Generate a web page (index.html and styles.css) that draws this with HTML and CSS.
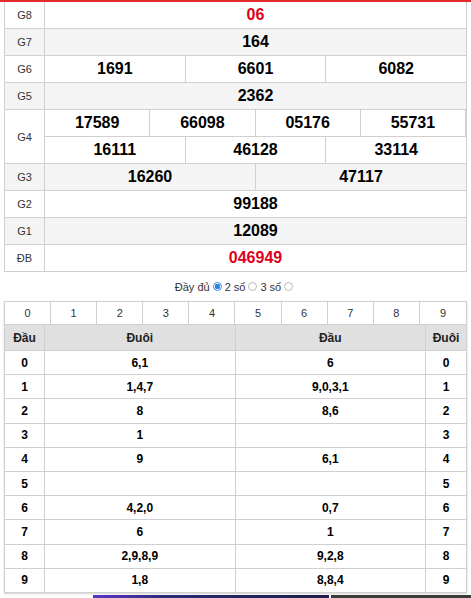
FILE: index.html
```html
<!DOCTYPE html>
<html lang="vi">
<head>
<meta charset="utf-8">
<title>KQXS</title>
<link rel="stylesheet" href="styles.css">
</head>
<body>
<div class="topbar"></div>
<div class="page">
  <div class="kq">
    <div class="row"><div class="lbl">G8</div><div class="vals"><div class="line"><div class="v red">06</div></div></div></div>
    <div class="row alt"><div class="lbl">G7</div><div class="vals"><div class="line"><div class="v">164</div></div></div></div>
    <div class="row"><div class="lbl">G6</div><div class="vals"><div class="line"><div class="v">1691</div><div class="v">6601</div><div class="v">6082</div></div></div></div>
    <div class="row alt"><div class="lbl">G5</div><div class="vals"><div class="line"><div class="v">2362</div></div></div></div>
    <div class="row"><div class="lbl">G4</div><div class="vals">
      <div class="line boxed"><div class="v">17589</div><div class="v">66098</div><div class="v">05176</div><div class="v">55731</div></div>
      <div class="line"><div class="v">16111</div><div class="v">46128</div><div class="v">33114</div></div>
    </div></div>
    <div class="row alt"><div class="lbl">G3</div><div class="vals"><div class="line"><div class="v">16260</div><div class="v">47117</div></div></div></div>
    <div class="row"><div class="lbl">G2</div><div class="vals"><div class="line"><div class="v">99188</div></div></div></div>
    <div class="row alt"><div class="lbl">G1</div><div class="vals"><div class="line"><div class="v">12089</div></div></div></div>
    <div class="row"><div class="lbl">ĐB</div><div class="vals"><div class="line"><div class="v red">046949</div></div></div></div>
  </div>

  <div class="opts">
    <span>Đầy đủ</span><span class="radio on"></span><span>2 số</span><span class="radio"></span><span>3 số</span><span class="radio"></span>
  </div>

  <div class="tk">
    <div class="digits">
      <div>0</div><div>1</div><div>2</div><div>3</div><div>4</div><div>5</div><div>6</div><div>7</div><div>8</div><div>9</div>
    </div>
    <div class="r head"><div>Đầu</div><div>Đuôi</div><div>Đầu</div><div>Đuôi</div></div>
    <div class="r"><div>0</div><div>6,1</div><div>6</div><div>0</div></div>
    <div class="r"><div>1</div><div>1,4,7</div><div>9,0,3,1</div><div>1</div></div>
    <div class="r"><div>2</div><div>8</div><div>8,6</div><div>2</div></div>
    <div class="r"><div>3</div><div>1</div><div></div><div>3</div></div>
    <div class="r"><div>4</div><div>9</div><div>6,1</div><div>4</div></div>
    <div class="r"><div>5</div><div></div><div></div><div>5</div></div>
    <div class="r"><div>6</div><div>4,2,0</div><div>0,7</div><div>6</div></div>
    <div class="r"><div>7</div><div>6</div><div>1</div><div>7</div></div>
    <div class="r"><div>8</div><div>2,9,8,9</div><div>9,2,8</div><div>8</div></div>
    <div class="r"><div>9</div><div>1,8</div><div>8,8,4</div><div>9</div></div>
  </div>

  <div class="ads"><div class="ad1"></div><div class="ad2"></div></div>
</div>
</body>
</html>
```
FILE: styles.css
```css
* { box-sizing: border-box; }
html, body { margin: 0; padding: 0; background: #fff; }
body { font-family: "Liberation Sans", Arial, sans-serif; color: #000; overflow: hidden; }

.topbar { height: 2px; background: #e52a2a; }

.page { padding: 0 4px 0 4px; }

.kq {
  border-left: 1px solid #d0d0d0;
  border-right: 1px solid #d0d0d0;
}
.row { display: flex; border-bottom: 1px solid #d0d0d0; background: #fff; }
.row.alt { background: #f4f4f4; }
.lbl {
  width: 40px;
  border-right: 1px solid #d0d0d0;
  display: flex; align-items: center; justify-content: center;
  font-size: 11px; color: #333;
}
.vals { flex: 1; display: flex; flex-direction: column; }
.line { display: flex; height: 26px; }
.line + .line { border-top: 1px solid #d0d0d0; height: 27px; }
.v {
  flex: 1 1 0;
  display: flex; align-items: center; justify-content: center;
  font-size: 16px; font-weight: bold;
}
.v + .v { border-left: 1px solid #d0d0d0; }
.line.boxed .v { border-left: 0; border-right: 1px solid #d0d0d0; }
.red { color: #e0001b; }

.opts {
  height: 29px;
  display: flex; align-items: center; justify-content: center;
  font-size: 11px; color: #333;
}
.radio {
  width: 9px; height: 9px; border-radius: 50%;
  border: 1px solid #b8b8b8; background: #fff;
  margin: 0 3px;
  display: inline-block;
}
.radio.on {
  border-color: #3c8ee0;
  background: radial-gradient(circle, #2e86de 0 2.6px, #fff 3px);
}

.tk {
  border: 1px solid #d0d0d0;
  box-shadow: 0 1px 2px rgba(0,0,0,0.18);
}
.digits {
  display: grid;
  grid-template-columns: repeat(10, 1fr);
  height: 23px;
  border-bottom: 1px solid #d0d0d0;
}
.digits div {
  display: flex; align-items: center; justify-content: center;
  font-size: 11px; color: #333;
  border-right: 1px solid #d0d0d0;
}
.digits div:last-child { border-right: 0; }

.r {
  display: grid;
  grid-template-columns: 40px 1fr 1fr 40px;
  height: 24.2px;
  border-bottom: 1px solid #d0d0d0;
}
.r:last-child { border-bottom: 0; height: 23.2px; }
.r div {
  display: flex; align-items: center; justify-content: center;
  font-size: 12px; font-weight: bold;
  border-right: 1px solid #d0d0d0;
}
.r div:last-child { border-right: 0; }
.r.head { height: 26px; background: #e0e0e0; }
.r.head div { font-size: 12px; color: #222; }

.ads { display: flex; margin-top: 2px; height: 6px; }
.ad1 {
  margin-left: 89px; width: 236px;
  background: linear-gradient(90deg, #5a35c8 0%, #2b2a7a 30%, #232561 60%, #1c1f4c 100%);
}
.ad2 { margin-left: 2px; flex: 1; margin-right: -4px; background: #3a3a3a; }
```
